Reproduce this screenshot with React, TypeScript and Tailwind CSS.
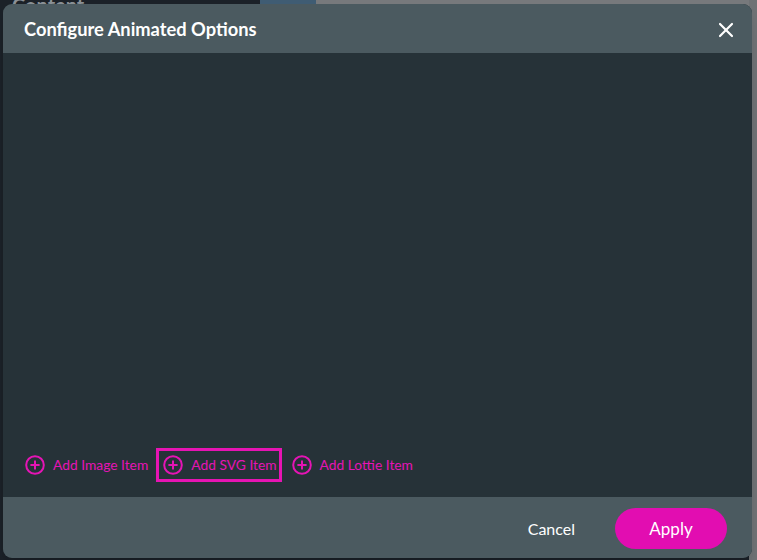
import { X } from 'lucide-react'

function PlusCircle() {
  return (
    <svg width="20" height="20" viewBox="0 0 20 20" fill="none" className="shrink-0">
      <circle cx="10" cy="10" r="8.8" stroke="currentColor" strokeWidth="2" />
      <path d="M10 5.4v9.2M5.4 10h9.2" stroke="currentColor" strokeWidth="2" />
    </svg>
  )
}

const items = ['Add Image Item', 'Add SVG Item', 'Add Lottie Item']

export default function App() {
  const focused = 1

  return (
    <div className="relative h-[560px] w-[757px] overflow-hidden bg-[#1b2128] font-['Lato','Open_Sans',sans-serif]">
      {/* page behind the modal */}
      <div className="flex h-[12px]">
        <div className="w-[260px] bg-[#1b2128] pl-[12px] text-[20px] font-bold leading-[10px] text-[#8a9096]">Content</div>
        <div className="w-[56px] bg-[#3f5c73]" />
        <div className="flex-1 bg-[#77797c]" />
      </div>
      <div className="absolute right-0 top-0 h-full w-[8px] bg-[#6f7275]" />

      {/* modal */}
      <div className="absolute left-[3px] top-[4px] flex h-[554px] w-[749px] flex-col overflow-hidden rounded-[9px] bg-[#263238] shadow-lg">
        <header className="flex h-[49px] shrink-0 items-center justify-between bg-[#4b5a60] pl-[21px] pr-[14px] pt-[2px]">
          <h2 className="text-[18.3px] font-bold text-white">Configure Animated Options</h2>
          <button aria-label="Close" className="text-white">
            <X className="h-[24px] w-[24px]" strokeWidth={2.2} />
          </button>
        </header>

        <div className="flex flex-1 flex-col justify-end pb-[15px] pl-[15px]">
          <div className="flex items-center gap-[3px]">
            {items.map((label, i) => (
              <button
                key={label}
                className={
                  'flex h-[34px] items-center gap-[8px] border-[3px] pl-[4px] pr-[2px] text-[13.8px] text-[#e514b5] ' +
                  (i === focused ? 'border-[#e614b3]' : 'border-transparent')
                }
              >
                <PlusCircle />
                {label}
              </button>
            ))}
          </div>
        </div>

        <footer className="flex h-[61px] shrink-0 items-center justify-end gap-[40px] bg-[#4b5a60] pr-[25px]">
          <button className="pt-[3px] text-[16px] text-white">Cancel</button>
          <button className="mt-[2px] h-[41px] w-[112px] rounded-full bg-[#e20db1] text-[17px] text-white">Apply</button>
        </footer>
      </div>
    </div>
  )
}
